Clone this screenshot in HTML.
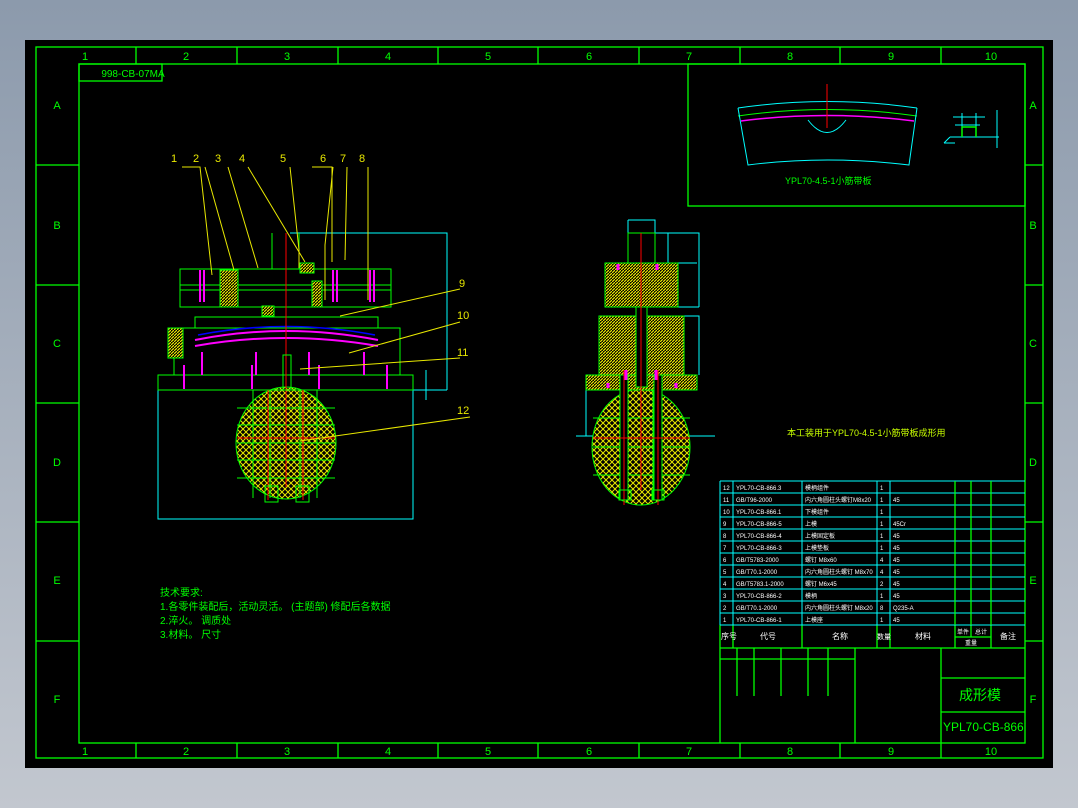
<!DOCTYPE html>
<html><head><meta charset="utf-8"><style>
html,body{margin:0;padding:0;width:1078px;height:808px;overflow:hidden;background:linear-gradient(#8c9aac,#c2c7cf);}
svg{position:absolute;left:0;top:0}
text{font-family:"Liberation Sans","Noto Sans CJK SC",sans-serif;}
</style></head><body>
<svg width="1078" height="808" viewBox="0 0 1078 808">
<defs>
<pattern id="h" width="6" height="6" patternUnits="userSpaceOnUse"><rect width="6" height="6" fill="#000"/><path d="M0 0L6 6M6 0L0 6" stroke="#e8e800" stroke-width="1"/></pattern>
<pattern id="h2" width="3" height="3" patternUnits="userSpaceOnUse"><rect width="3" height="3" fill="#000"/><path d="M0 3L3 0" stroke="#e8e800" stroke-width="1.2"/></pattern>
</defs>
<rect x="25" y="40" width="1028" height="728" fill="#000"/>
<g stroke="#00ff00" stroke-width="1.3" fill="none">
<rect x="36" y="47" width="1007" height="711"/>
<rect x="79" y="64" width="946" height="679"/>
<path d="M136 47V64M237 47V64M338 47V64M438 47V64M538 47V64M639 47V64M740 47V64M840 47V64M941 47V64"/>
<path d="M136 743V758M237 743V758M338 743V758M438 743V758M538 743V758M639 743V758M740 743V758M840 743V758M941 743V758"/>
<path d="M36 165H79M36 285H79M36 403H79M36 522H79M36 641H79"/>
<path d="M1025 165H1043M1025 285H1043M1025 403H1043M1025 522H1043M1025 641H1043"/>
<rect x="79" y="64" width="83" height="17"/>
<rect x="688" y="64" width="337" height="142"/>
<path d="M720 648V743M720 648H1025M941 648V743M941 678H1025M941 712H1025M855 648V743M720 659H855M737 648V696M754 648V696M781 648V696M808 648V696M828 648V696"/>
<path d="M720 625V648M733 625V648M802 625V648M877 625V648M890 625V648M955 481V648M971 481V637M991 481V648M955 637H991"/>
</g>
<g fill="#00ff00" font-size="11" text-anchor="middle">
<text x="85" y="60">1</text><text x="186" y="60">2</text><text x="287" y="60">3</text><text x="388" y="60">4</text><text x="488" y="60">5</text><text x="589" y="60">6</text><text x="689" y="60">7</text><text x="790" y="60">8</text><text x="891" y="60">9</text><text x="991" y="60">10</text>
<text x="85" y="755">1</text><text x="186" y="755">2</text><text x="287" y="755">3</text><text x="388" y="755">4</text><text x="488" y="755">5</text><text x="589" y="755">6</text><text x="689" y="755">7</text><text x="790" y="755">8</text><text x="891" y="755">9</text><text x="991" y="755">10</text>
<text x="57" y="109">A</text><text x="57" y="229">B</text><text x="57" y="347">C</text><text x="57" y="466">D</text><text x="57" y="584">E</text><text x="57" y="703">F</text>
<text x="1033" y="109">A</text><text x="1033" y="229">B</text><text x="1033" y="347">C</text><text x="1033" y="466">D</text><text x="1033" y="584">E</text><text x="1033" y="703">F</text>
<text x="133" y="77" font-size="10">998-CB-07MA</text>
<text x="980" y="700" font-size="14">成形模</text>
</g>
<text x="943" y="731" font-size="12" fill="#00ff00">YPL70-CB-866</text>
<g fill="#00ff00" font-size="10">
<text x="160" y="596">技术要求:</text>
<text x="160" y="610">1.各零件装配后，活动灵活。  (主题部)  修配后各数据</text>
<text x="160" y="624">2.淬火。     调质处</text>
<text x="160" y="638">3.材料。      尺寸</text>
<text x="785" y="184" font-size="9">YPL70-4.5-1小筋带板</text>
<text x="787" y="436" font-size="9" fill="#c8ff00">本工装用于YPL70-4.5-1小筋带板成形用</text>
</g>
<g stroke="#00ffff" stroke-width="1">
<path d="M720 481H1025M720 493H1025M720 505H1025M720 517H1025M720 529H1025M720 541H1025M720 553H1025M720 565H1025M720 577H1025M720 589H1025M720 601H1025M720 613H1025M720 625H1025"/>
<path d="M720 481V625M733 481V625M802 481V625M877 481V625M890 481V625"/>
</g>
<g stroke="#00ff00"><path d="M955 481V625M971 481V625M991 481V625"/></g>
<g fill="#fff" font-size="6">
<text x="723" y="490">12</text><text x="736" y="490">YPL70-CB-866.3</text><text x="805" y="490">模柄组件</text><text x="880" y="490">1</text>
<text x="723" y="502">11</text><text x="736" y="502">GB/T96-2000</text><text x="805" y="502">内六角圆柱头螺钉M8x20</text><text x="880" y="502">1</text><text x="893" y="502">45</text>
<text x="723" y="514">10</text><text x="736" y="514">YPL70-CB-866.1</text><text x="805" y="514">下模组件</text><text x="880" y="514">1</text>
<text x="723" y="526">9</text><text x="736" y="526">YPL70-CB-866-5</text><text x="805" y="526">上模</text><text x="880" y="526">1</text><text x="893" y="526">45Cr</text>
<text x="723" y="538">8</text><text x="736" y="538">YPL70-CB-866-4</text><text x="805" y="538">上模固定板</text><text x="880" y="538">1</text><text x="893" y="538">45</text>
<text x="723" y="550">7</text><text x="736" y="550">YPL70-CB-866-3</text><text x="805" y="550">上模垫板</text><text x="880" y="550">1</text><text x="893" y="550">45</text>
<text x="723" y="562">6</text><text x="736" y="562">GB/T5783-2000</text><text x="805" y="562">螺钉  M8x60</text><text x="880" y="562">4</text><text x="893" y="562">45</text>
<text x="723" y="574">5</text><text x="736" y="574">GB/T70.1-2000</text><text x="805" y="574">内六角圆柱头螺钉 M8x70</text><text x="880" y="574">4</text><text x="893" y="574">45</text>
<text x="723" y="586">4</text><text x="736" y="586">GB/T5783.1-2000</text><text x="805" y="586">螺钉  M6x45</text><text x="880" y="586">2</text><text x="893" y="586">45</text>
<text x="723" y="598">3</text><text x="736" y="598">YPL70-CB-866-2</text><text x="805" y="598">模柄</text><text x="880" y="598">1</text><text x="893" y="598">45</text>
<text x="723" y="610">2</text><text x="736" y="610">GB/T70.1-2000</text><text x="805" y="610">内六角圆柱头螺钉 M8x20</text><text x="880" y="610">8</text><text x="893" y="610">Q235-A</text>
<text x="723" y="622">1</text><text x="736" y="622">YPL70-CB-866-1</text><text x="805" y="622">上模座</text><text x="880" y="622">1</text><text x="893" y="622">45</text>
<text x="721" y="639" font-size="8">序号</text><text x="760" y="639" font-size="8">代号</text><text x="832" y="639" font-size="8">名称</text><text x="877" y="639" font-size="7">数量</text><text x="915" y="639" font-size="8">材料</text><text x="957" y="634">单件</text><text x="975" y="634">总计</text><text x="965" y="645">重量</text><text x="1000" y="639" font-size="8">备注</text>
</g>
<g fill="none" stroke-width="1">
<path d="M738 108Q827 95 917 108" stroke="#00ffff"/>
<path d="M738 116Q827 103 917 116" stroke="#00ff00"/>
<path d="M741 121Q827 110 914 121" stroke="#ff00ff" stroke-width="1.5"/>
<path d="M738 108L748 165Q827 155 909 165L917 108" stroke="#00ffff"/>
<path d="M808 120Q827 145 846 120" stroke="#00ffff"/>
<path d="M827 84V128" stroke="#ff0000"/>
<path d="M953 117H985M955 125H980M950 137H999M962 113V137M976 113V137M997 110V148M944 143L950 137M944 143H955" stroke="#00ffff"/>
<path d="M962 137V127H976V137" stroke="#00ff00" stroke-width="1.5"/>
</g>
<g fill="none" stroke-width="1">
<rect x="158" y="390" width="255" height="129" stroke="#00ffff"/>
<path d="M290 233H447V390M410 390H447M426 370V400" stroke="#00ffff"/>
<ellipse cx="286" cy="443" rx="50" ry="56" fill="url(#h)" stroke="#00ff00"/>
<path d="M253 390V498M270 390V498M300 390V498M317 390V498" stroke="#00ff00"/>
<path d="M237 408H335M237 425H335M237 443H335M237 460H335M237 478H335" stroke="#00ff00"/>
<rect x="158" y="375" width="255" height="15" stroke="#00ff00"/>
<rect x="174" y="328" width="226" height="47" stroke="#00ff00"/>
<rect x="195" y="317" width="183" height="11" stroke="#00ff00"/>
<rect x="180" y="269" width="211" height="38" stroke="#00ff00"/>
<path d="M180 285H391M180 290H391M272 233V269H299V233" stroke="#00ff00"/>
<path d="M195 340Q286 322 378 340M195 346Q286 330 378 346" stroke="#ff00ff" stroke-width="2"/>
<path d="M198 335Q286 318 375 335" stroke="#0000ff" stroke-width="1.5"/>
<path d="M286 233V487M237 438H335M268 390V500M303 390V500" stroke="#ff0000"/>
<rect x="220" y="270" width="18" height="37" fill="url(#h2)" stroke="#00ff00"/>
<rect x="312" y="281" width="10" height="26" fill="url(#h2)" stroke="#00ff00"/>
<rect x="168" y="328" width="15" height="30" fill="url(#h2)" stroke="#00ff00"/>
<rect x="262" y="306" width="12" height="10" fill="url(#h2)" stroke="#00ff00"/>
<rect x="300" y="263" width="14" height="10" fill="url(#h2)" stroke="#00ff00"/>
<path d="M200 270V302M204 270V302M333 270V302M337 270V302M370 270V302M374 270V302M202 352V375M256 352V375M309 352V375M364 352V375M184 365V389M252 365V389M319 365V389M387 365V389" stroke="#ff00ff" stroke-width="2"/>
<rect x="283" y="355" width="8" height="35" stroke="#00ff00"/>
<path d="M265 486H278V502H265ZM296 486H309V502H296Z" stroke="#00ff00"/>
<path d="M182 167H200L212 275M205 167L234 270M228 167L258 268M248 167L305 262M290 167L299 250V268M312 167H332V262M333 167L325 245V300M347 167L345 260M368 167L368 300M340 316L460 289M349 353L460 322M300 369L460 358M300 441L470 417" stroke="#e8e800"/>
</g>
<g fill="#e8e800" font-size="11">
<text x="171" y="162">1</text><text x="193" y="162">2</text><text x="215" y="162">3</text><text x="239" y="162">4</text><text x="280" y="162">5</text><text x="320" y="162">6</text><text x="340" y="162">7</text><text x="359" y="162">8</text>
<text x="459" y="287">9</text><text x="457" y="319">10</text><text x="457" y="356">11</text><text x="457" y="414">12</text>
</g>
<g fill="none" stroke-width="1">
<path d="M628 220H655V233M628 220V233M628 233H668V307M668 233H699V307M668 263H697M668 307H699M684 316H699V375M576 436H715M586 390V436" stroke="#00ffff"/>
<ellipse cx="641" cy="447" rx="49" ry="58" fill="url(#h)" stroke="#00ff00"/>
<path d="M593 418H690M593 447H690M593 475H690M620 390V500M628 390V500M653 390V500M662 390V500" stroke="#00ff00"/>
<rect x="586" y="375" width="111" height="15" fill="url(#h2)" stroke="#00ff00"/>
<rect x="599" y="316" width="85" height="59" fill="url(#h2)" stroke="#00ff00"/>
<rect x="605" y="263" width="73" height="44" fill="url(#h2)" stroke="#00ff00"/>
<rect x="628" y="233" width="27" height="30" fill="#000" stroke="#00ff00"/>
<rect x="636" y="307" width="11" height="80" fill="#000" stroke="#00ff00"/>
<rect x="620" y="375" width="8" height="125" fill="#000" stroke="#00ff00"/>
<rect x="654" y="375" width="8" height="125" fill="#000" stroke="#00ff00"/>
<path d="M641 233V490M624 370V505M658 370V505M593 438H690" stroke="#ff0000"/>
<path d="M618 264V270M657 264V270M608 383V388M676 383V388M626 370V380M656 370V380" stroke="#ff00ff" stroke-width="3"/>
<path d="M619 490H631V500H619ZM652 490H664V500H652Z" stroke="#00ff00"/>
</g>
</svg>
</body></html>
